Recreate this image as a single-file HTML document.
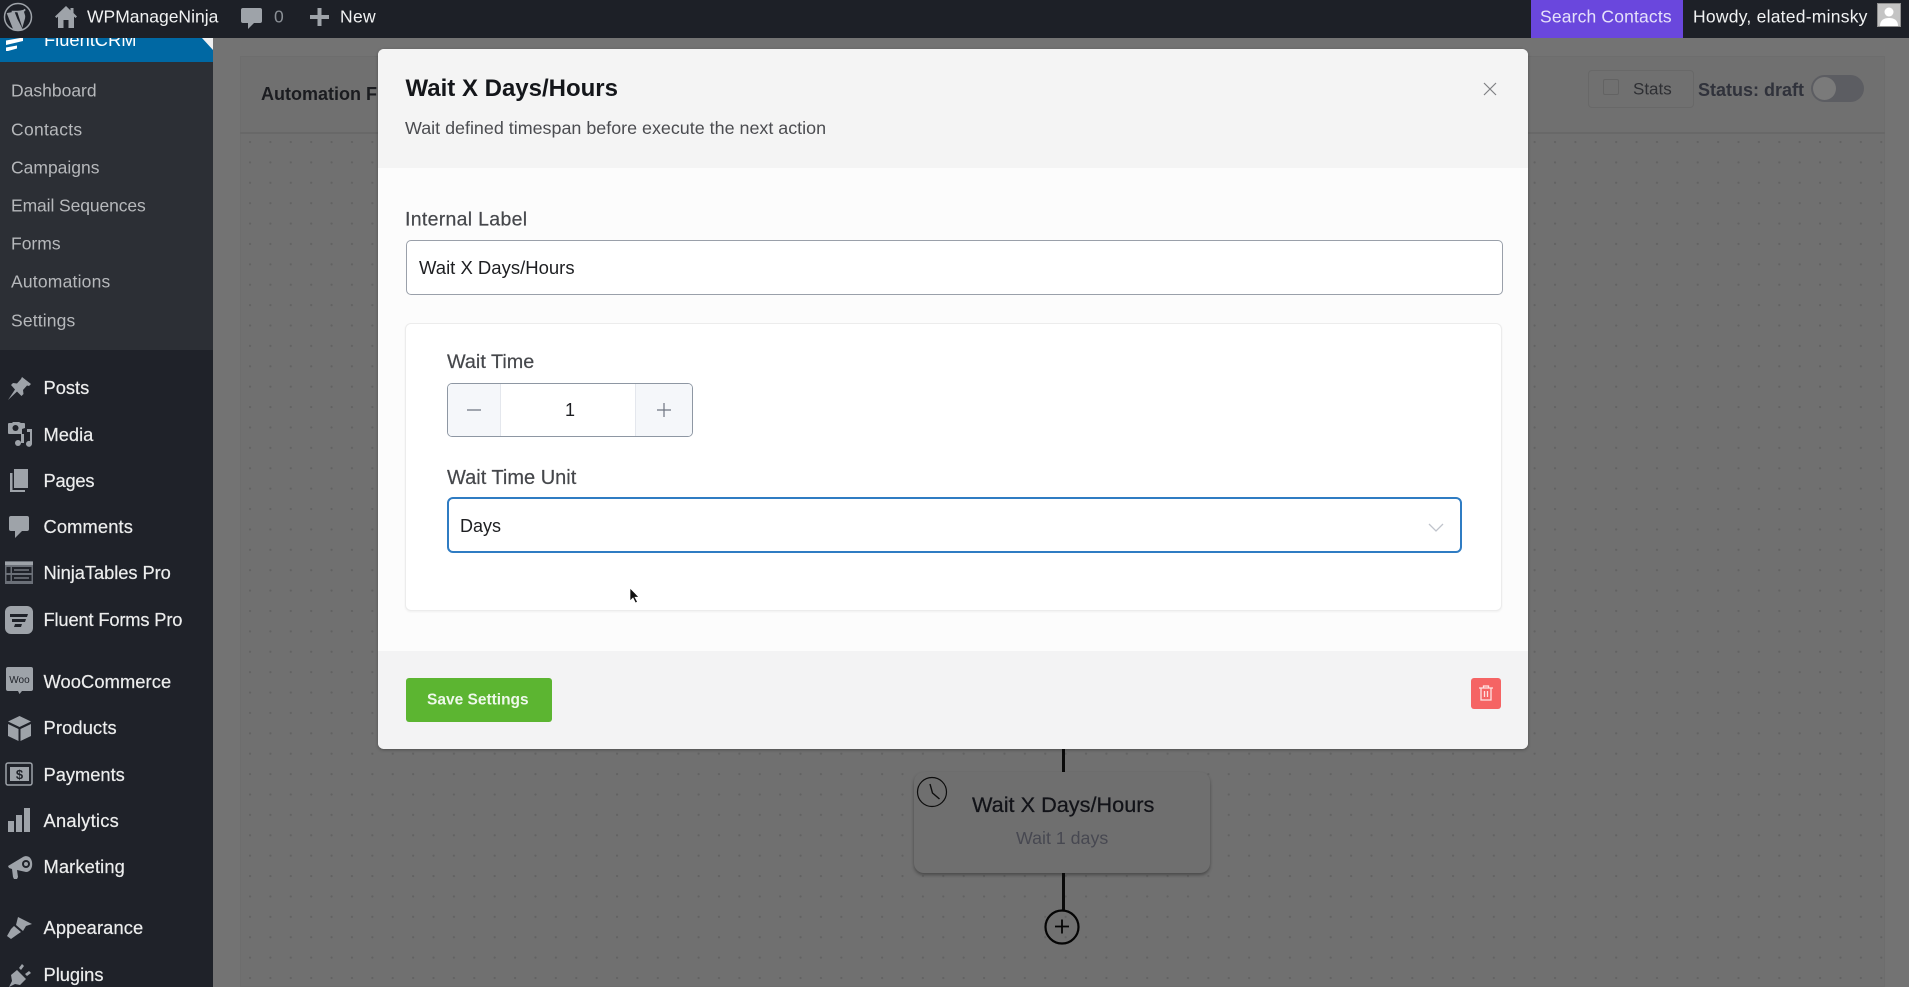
<!DOCTYPE html>
<html lang="en"><head><meta charset="utf-8"><title>Wait X Days/Hours</title>
<style>
*{box-sizing:border-box}
html,body{margin:0;padding:0;width:1909px;height:987px;overflow:hidden;background:#737373;font-family:"Liberation Sans",sans-serif}
#root{position:absolute;left:0;top:0;width:1909px;height:987px;overflow:hidden;filter:blur(.3px)}
.t{position:absolute;white-space:nowrap;line-height:1;transform:translateY(-50%)}
.b{position:absolute}
svg{position:absolute;overflow:visible}
#top{left:0;top:0;width:1909px;height:38px;background:#1d2027;z-index:5}
#side{left:0;top:38px;width:213px;height:949px;background:#1f2229}
#sub{left:0;top:62px;width:213px;height:288px;background:#2c2f35}
#blue{left:0;top:38px;width:213px;height:24px;background:#0068a3;overflow:hidden}
.m{left:43.5px;font-size:18.3px;color:#eceded;-webkit-text-stroke:.2px #eceded}
.s{left:11px;font-size:17.5px;color:#b6b8bb}
#panel{left:240px;top:56px;width:1645px;height:931px;background-color:#707070;border:1px solid #6d6d6d}
#dots{left:240px;top:132px;width:1645px;height:855px;border-top:2px solid #686868;background-image:radial-gradient(circle at 10px 8px,#626262 0,#626262 .9px,transparent 1.3px);background-size:20.4px 20.4px}
#modal{left:378px;top:49px;width:1150px;height:700px;background:#fcfcfc;border-radius:6px;overflow:hidden;box-shadow:0 1px 3px rgba(0,0,0,.3)}
#mh{left:0;top:0;width:1150px;height:119px;background:#f4f4f4}
#mf{left:0;top:602px;width:1150px;height:98px;background:#f3f3f4}
</style></head><body>
<div id="root">

<div class="b" id="panel"></div>
<div class="b" id="dots"></div>
<div class="t" style="left:261px;top:94px;font-size:18px;font-weight:bold;color:#1b1c20">Automation Funnel</div>
<div class="b" style="left:1588px;top:70px;width:106px;height:38px;border:1px solid #686868;border-radius:4px"></div>
<div class="b" style="left:1603px;top:79px;width:16px;height:16px;border:1px solid #636363;border-radius:2px"></div>
<div class="t" style="left:1633px;top:88.5px;font-size:17px;color:#2e2f33">Stats</div>
<div class="t" style="left:1698px;top:89.5px;font-size:18px;font-weight:bold;color:#30323b">Status: draft</div>
<div class="b" style="left:1811px;top:75px;width:53px;height:27px;border-radius:14px;background:#5c5d62"></div>
<div class="b" style="left:1813px;top:77px;width:23px;height:23px;border-radius:50%;background:#7a7a7a"></div>

<!-- workflow node -->
<div class="b" style="left:1062px;top:749px;width:3px;height:24px;background:#0a0a0a"></div>
<div class="b" style="left:914px;top:772px;width:296px;height:101px;border-radius:10px;background:#6f6f6f;box-shadow:0 2px 3px rgba(0,0,0,.35)"></div>
<svg style="left:916px;top:776px" width="32" height="32" viewBox="0 0 32 32" fill="none" stroke="#0d0d0d"><circle cx="16" cy="16" r="14.5" stroke-width="1.2"/><path d="M14 8l2.500 9 7 6" stroke-width="1.4"/></svg>
<div class="t" style="left:972px;top:805px;font-size:21.7px;color:#121318;-webkit-text-stroke:.25px #121318">Wait X Days/Hours</div>
<div class="t" style="left:1016px;top:839px;font-size:17.800px;color:#474851">Wait 1 days</div>
<div class="b" style="left:1062px;top:873px;width:3px;height:37px;background:#0a0a0a"></div>
<svg style="left:1044px;top:909px" width="36" height="36" viewBox="0 0 36 36" fill="none" stroke="#050505"><circle cx="18" cy="18" r="16.500" stroke-width="2.200"/><path d="M18 10.500v14M11 17.500h14" stroke-width="1.800"/></svg>

<!-- sidebar -->
<div class="b" id="side"></div>
<div class="b" id="sub"></div>
<div class="b" id="blue">
 <div class="t" style="left:44px;top:2px;font-size:18.300px;color:#fff">FluentCRM</div>
 <svg style="left:5px;top:0" width="20" height="14" viewBox="0 0 20 14"><path d="M1 2.500l17-3v3.500L1 7zM1 9.500l11-2v3l-9 2.500H1z" fill="#fff"/></svg>
 <svg style="left:201px;top:0" width="12" height="12" viewBox="0 0 12 12"><path d="M12 0v12L1 0z" fill="#f0f0f1"/></svg>
</div>
<div class="t s" style="top:91px">Dashboard</div>
<div class="t s" style="top:129.5px;letter-spacing:.3px">Contacts</div>
<div class="t s" style="top:167.5px">Campaigns</div>
<div class="t s" style="top:205.500px;letter-spacing:-.1px">Email Sequences</div>
<div class="t s" style="top:244px">Forms</div>
<div class="t s" style="top:282px;letter-spacing:.2px">Automations</div>
<div class="t s" style="top:320.500px;letter-spacing:.15px">Settings</div>

<div class="t m" style="top:388px">Posts</div>
<div class="t m" style="top:434.500px">Media</div>
<div class="t m" style="top:481px;letter-spacing:-.2px">Pages</div>
<div class="t m" style="top:527px;letter-spacing:.15px">Comments</div>
<div class="t m" style="top:573px;letter-spacing:-.05px">NinjaTables Pro</div>
<div class="t m" style="top:620px;letter-spacing:-.15px">Fluent Forms Pro</div>
<div class="t m" style="top:682px;letter-spacing:.1px">WooCommerce</div>
<div class="t m" style="top:728px;letter-spacing:.15px">Products</div>
<div class="t m" style="top:774.500px">Payments</div>
<div class="t m" style="top:821px;letter-spacing:.27px">Analytics</div>
<div class="t m" style="top:867px;letter-spacing:.13px">Marketing</div>
<div class="t m" style="top:928px;letter-spacing:.12px">Appearance</div>
<div class="t m" style="top:975px">Plugins</div>

<svg style="left:6px;top:375px" width="26" height="26" viewBox="0 0 26 26" fill="#9ea3a9"><path d="M16 2l9 7-2 2-2-.5-4 4.500.5 4-2 2-4.500-4.500L2 25l7-10.500L5 10l2-2 4 .5 4-4.500z"/></svg>
<svg style="left:6px;top:420px" width="28" height="28" viewBox="0 0 28 28" fill="#9ea3a9"><path d="M3 3h3l1-1h6l2 1h3a1 1 0 0 1 1 1v4l-3 1v5H3a1 1 0 0 1-1-1V4a1 1 0 0 1 1-1z"/><circle cx="9.500" cy="8" r="3" fill="#1f2229"/><path d="M21 9h5v15a3 3 0 1 1-2-3V12h-3z"/><circle cx="12" cy="23" r="3"/><path d="M15 14h3v9h-3z"/></svg>
<svg style="left:8px;top:468px" width="22" height="25" viewBox="0 0 22 25" fill="#9ea3a9"><path d="M6 1h14v19H6z"/><path d="M2 5h2.500v17H17v2H2z"/></svg>
<svg style="left:8px;top:515px" width="22" height="24" viewBox="0 0 22 24" fill="#9ea3a9"><path d="M3 1h16a2 2 0 0 1 2 2v11a2 2 0 0 1-2 2h-5l-7 7v-7H3a2 2 0 0 1-2-2V3a2 2 0 0 1 2-2z"/></svg>
<svg style="left:5px;top:561px" width="28" height="23" viewBox="0 0 28 23"><rect width="28" height="23" fill="#6b7078"/><rect y="1" width="28" height="3" fill="#9ea3a9"/><path d="M1.500 6h4v6h-4zM1.500 14h4v6h-4zM7 6h19.500v6H7zM7 14h19.500v6H7z" fill="#1f2229"/><path d="M9 9h15M9 17h15" stroke="#9ea3a9"/></svg>
<svg style="left:5px;top:606px" width="28" height="28" viewBox="0 0 28 28"><rect width="28" height="28" rx="6" fill="#9ea3a9"/><path d="M5 8h18l-1 3H5zM7 13h14l-1 3H7zM10 18h7l-1 3h-7z" fill="#1f2229"/></svg>
<svg style="left:6px;top:667px" width="27" height="28" viewBox="0 0 27 28"><path d="M2 0h23a2 2 0 0 1 2 2v20a2 2 0 0 1-2 2h-9l-2.500 3-1.500-3H2a2 2 0 0 1-2-2V2a2 2 0 0 1 2-2z" fill="#9ea3a9"/><text x="13.500" y="16" text-anchor="middle" font-size="10" font-family="Liberation Sans" fill="#1f2229">Woo</text></svg>
<svg style="left:7px;top:715px" width="25" height="27" viewBox="0 0 25 27" fill="#9ea3a9"><path d="M12.500 1L24 6.500 12.500 12 1 6.500zM1 9l10.500 5v12L1 21zM24 9l-10.500 5v12L24 21z"/></svg>
<svg style="left:5px;top:762px" width="28" height="25" viewBox="0 0 28 25"><rect x="1" y="1" width="26" height="22" rx="2" fill="none" stroke="#9ea3a9" stroke-width="1.500"/><rect x="5" y="5" width="19" height="14" fill="#9ea3a9"/><text x="14.500" y="17" text-anchor="middle" font-size="13" font-weight="bold" font-family="Liberation Sans" fill="#1f2229">$</text></svg>
<svg style="left:8px;top:808px" width="23" height="24" viewBox="0 0 23 24" fill="#9ea3a9"><path d="M0 13h6v11H0zM8 7h6v17H8zM16 0h6v24h-6z"/></svg>
<svg style="left:7px;top:854px" width="26" height="26" viewBox="0 0 26 26" fill="#9ea3a9"><path d="M1 12l15-9c3-2 8-1 9 5s-2 10-6 10l-9-2 1 7-1 2H7l-1-2-1-8-3-1z"/><circle cx="19" cy="10" r="4" fill="#1f2229"/><circle cx="19" cy="10" r="2"/></svg>
<svg style="left:6px;top:916px" width="27" height="24" viewBox="0 0 27 24" fill="#9ea3a9"><path d="M12 1l14 7-6 2-3 5-7-6zM8 10l7 6-3 2-7 5-4-3 4-7z"/></svg>
<svg style="left:8px;top:963px" width="23" height="24" viewBox="0 0 23 24" fill="#9ea3a9"><path d="M1 24l3-6-1-6 6-5 9 9-6 6-5-1-6 3zM11 5l3-4 2 2-3 4zM17 11l4-3 2 2-4 3z"/></svg>

<!-- top bar -->
<div class="b" id="top"></div>
<div style="position:absolute;left:0;top:0;z-index:6;width:1909px;height:38px">
 <svg style="left:3px;top:2px" width="30" height="30" viewBox="0 0 30 30" fill="none"><circle cx="15" cy="15" r="13.500" stroke="#9ea3a9" stroke-width="1.500"/><path d="M4.500 11l6 15 3-9-2.500-6.500H9.500V9.500h8V11h-2l3.800 12 2-7c.8-3-1-4-1-6 0-1.500 1-2 2-2.500M14 18l-3 9c2.500.6 5 .6 7.500-.3z" stroke="#9ea3a9" stroke-width="1.600" fill="#9ea3a9"/></svg>
 <svg style="left:55px;top:6px" width="22" height="22" viewBox="0 0 22 22"><path d="M11 0L0 10.500l1.500 1.500L3 10.600V22h16V10.600l1.500 1.400 1.500-1.500-3.500-3.500V2h-3v2.400z" fill="#9ea3a9"/><path d="M8.500 14h5v8h-5z" fill="#1d2027"/></svg>
 <div class="t" style="left:87px;top:17px;font-size:17.500px;color:#f1f2f3">WPManageNinja</div>
 <svg style="left:241px;top:7px" width="22" height="22" viewBox="0 0 22 22" fill="#9ea3a9"><path d="M2 1h17a2 2 0 0 1 2 2v11a2 2 0 0 1-2 2h-6l-6 6v-6H2a2 2 0 0 1-2-2V3a2 2 0 0 1 2-2z"/></svg>
 <div class="t" style="left:274px;top:17px;font-size:17.500px;color:#8b9096">0</div>
 <svg style="left:310px;top:8px" width="19" height="18" viewBox="0 0 19 18" fill="#9ea3a9"><path d="M7.500 0h4v7h7.500v4h-7.500v7h-4v-7H0V7h7.500z"/></svg>
 <div class="t" style="left:340px;top:17px;font-size:17.500px;letter-spacing:.3px;color:#f1f2f3">New</div>
 <div class="b" style="left:1531px;top:0;width:152px;height:38px;background:#6a47dd"></div>
 <div class="t" style="left:1540px;top:17px;font-size:17.500px;letter-spacing:.16px;color:#e6e1fa">Search Contacts</div>
 <div class="t" style="left:1693px;top:17px;font-size:17.500px;letter-spacing:.24px;color:#f1f2f3">Howdy, elated-minsky</div>
 <svg style="left:1877px;top:3px" width="24" height="24" viewBox="0 0 24 24"><rect width="24" height="24" fill="#c4c4c4"/><rect x=".5" y=".5" width="23" height="23" fill="none" stroke="#8f8f8f"/><circle cx="12" cy="9" r="4.500" fill="#fff"/><path d="M3 23c0-6 4-8 9-8s9 2 9 8z" fill="#fff"/></svg>
</div>

<!-- modal -->
<div class="b" id="modal">
 <div class="b" id="mh"></div>
 <div class="b" id="mf"></div>
 <div class="t" style="left:27.500px;top:40px;font-size:24px;font-weight:bold;color:#14161a">Wait X Days/Hours</div>
 <div class="t" style="left:27px;top:80px;font-size:17.900px;color:#4b4c50">Wait defined timespan before execute the next action</div>
 <svg style="left:1105px;top:33px" width="14" height="14" viewBox="0 0 14 14" stroke="#7f8083" stroke-width="1.200" fill="none"><path d="M1 1l12 12M13 1L1 13"/></svg>

 <div class="t" style="left:27px;top:171px;font-size:19.500px;letter-spacing:.3px;color:#45474b;-webkit-text-stroke:.2px #45474b">Internal Label</div>
 <div class="b" style="left:28px;top:191px;height:55px;width:1097px;background:#fff;border:1px solid #9aa0aa;border-radius:5px"></div>
 <div class="t" style="left:41px;top:219px;font-size:18.500px;color:#1e1f22">Wait X Days/Hours</div>

 <div class="b" style="left:27px;top:274px;width:1097px;height:288px;background:#fff;border:1px solid #ececec;border-radius:6px;box-shadow:0 1px 2px rgba(0,0,0,.05)"></div>
 <div class="t" style="left:69px;top:314px;font-size:19.800px;color:#45474b;-webkit-text-stroke:.2px #45474b">Wait Time</div>
 <div class="b" style="left:69px;top:334px;width:246px;height:54px;background:#fff;border:1px solid #8e97a3;border-radius:5px;overflow:hidden">
   <div class="b" style="left:0;top:0;width:53px;height:54px;background:#f5f7fa;border-right:1px solid #e4e7ed"></div>
   <div class="b" style="right:0;top:0;width:57px;height:54px;background:#f5f7fa;border-left:1px solid #e4e7ed"></div>
 </div>
 <svg style="left:88px;top:353px" width="16" height="16" viewBox="0 0 16 16" stroke="#6e7480" stroke-width="1.200"><path d="M1 8h14"/></svg>
 <svg style="left:278px;top:353px" width="16" height="16" viewBox="0 0 16 16" stroke="#6e7480" stroke-width="1.200"><path d="M1 8h14M8 1v14"/></svg>
 <div class="t" style="left:187px;top:361px;font-size:18px;color:#1d1e22">1</div>

 <div class="t" style="left:69px;top:429px;font-size:20px;color:#45474b;-webkit-text-stroke:.2px #45474b">Wait Time Unit</div>
 <div class="b" style="left:69px;top:448px;width:1015px;height:56px;background:#fff;border:2px solid #2f7cc3;border-radius:6px"></div>
 <div class="t" style="left:82px;top:477px;font-size:18px;color:#1e1f22">Days</div>
 <svg style="left:1050px;top:474px" width="16" height="10" viewBox="0 0 16 10" fill="none" stroke="#c0c4cc" stroke-width="1.300"><path d="M1 1l7 7 7-7"/></svg>

 <svg style="left:251px;top:538px" width="11" height="17" viewBox="0 0 11 17"><path d="M1 1v13l3-3 2.500 5 2-1-2.500-4.800h4z" fill="#111" stroke="#fff" stroke-width=".7"/></svg>

 <div class="b" style="left:28px;top:629px;width:146px;height:44px;background:#5cb531;border-radius:3px"></div>
 <div class="t" style="left:49px;top:651px;font-size:15.500px;font-weight:bold;color:#eef8ea">Save Settings</div>
 <div class="b" style="left:1093px;top:629px;width:30px;height:31px;background:#f56464;border-radius:3px"></div>
 <svg style="left:1101px;top:636px" width="14" height="16" viewBox="0 0 14 16" fill="none" stroke="#fde3e3" stroke-width="1.300"><path d="M0 3h14M4.500 3V1h5v2M2 3v12h10V3M5.500 6v6M8.500 6v6"/></svg>
</div>
</div>
</body></html>
